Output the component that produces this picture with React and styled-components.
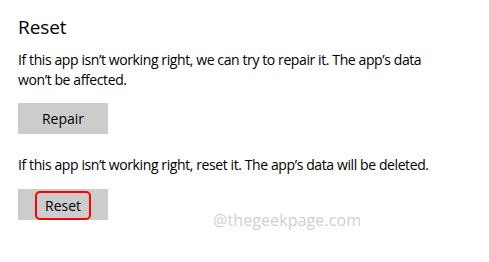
import React from "react";
import styled, { createGlobalStyle } from "styled-components";

const Global = createGlobalStyle`
  html, body {
    margin: 0;
    padding: 0;
    background: #fff;
  }
  body {
    font-family: "Open Sans", "Noto Sans", sans-serif;
    color: #000;
  }
`;

const Page = styled.div`
  position: relative;
  width: 489px;
  height: 262px;
  padding: 13px 0 0 18px;
  box-sizing: border-box;
  overflow: hidden;
`;

const Title = styled.h2`
  margin: 0;
  font-size: 19px;
  font-weight: 400;
  line-height: 28px;
  letter-spacing: -0.1px;
`;

const Text = styled.p`
  margin: ${(p) => p.$top}px 0 0;
  font-size: 14px;
  line-height: 20px;
  letter-spacing: -0.4px;
  width: 422px;
`;

const Button = styled.button`
  display: flex;
  align-items: center;
  justify-content: center;
  margin-top: ${(p) => p.$top}px;
  width: 90px;
  height: 31px;
  padding: 0;
  border: none;
  background: #cccccc;
  font-family: inherit;
  font-size: 14px;
  color: #000;
`;

const Highlight = styled.span`
  display: flex;
  align-items: center;
  justify-content: center;
  align-self: flex-end;
  width: 56px;
  height: 29px;
  border: 2px solid #ff0000;
  border-radius: 5px;
  box-sizing: border-box;
`;

const Watermark = styled.div`
  position: absolute;
  left: 213px;
  top: 209px;
  font-size: 16px;
  color: #cfcfcf;
  letter-spacing: 0.1px;
`;

export default function App() {
  return (
    <>
      <Global />
      <Page>
        <Title>Reset</Title>
        <Text $top={9}>
          If this app isn’t working right, we can try to repair it. The app’s data
          won’t be affected.
        </Text>
        <Button $top={13}>Repair</Button>
        <Text $top={21}>
          If this app isn’t working right, reset it. The app’s data will be deleted.
        </Text>
        <Button $top={14}>
          <Highlight>Reset</Highlight>
        </Button>
        <Watermark>@thegeekpage.com</Watermark>
      </Page>
    </>
  );
}
